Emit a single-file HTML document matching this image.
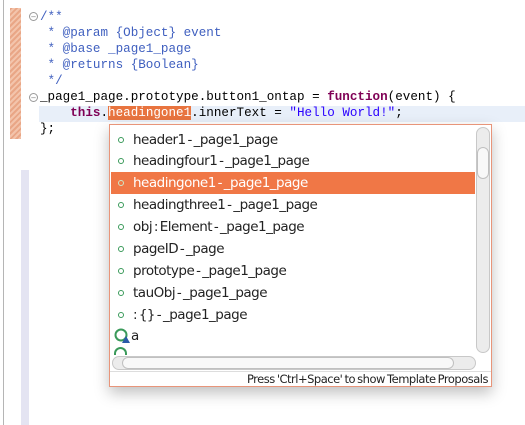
<!DOCTYPE html>
<html><head><style>
*{margin:0;padding:0;box-sizing:border-box}
body{width:525px;height:425px;background:#fff;position:relative;overflow:hidden;font-family:"Liberation Sans",sans-serif}
.abs{position:absolute}
.code{font-family:"Liberation Mono","DejaVu Sans Mono",monospace;font-size:12.6px;line-height:16px;white-space:pre;color:#000}
.cm{color:#3f5fbf}
.kw{color:#7f0055;font-weight:bold}
.str{color:#2a00ff}
.item{position:absolute;left:1px;width:364px;height:22px;font-size:13.5px;line-height:22px;color:#222;padding-left:22px;font-family:"DejaVu Sans","Liberation Sans",sans-serif;letter-spacing:-0.5px;word-spacing:-2px}
.item .dot{position:absolute;left:7px;top:8px;width:6px;height:6px;border:1.5px solid #3a9a5a;border-radius:50%}
.sel{background:#f07746;color:#fff}
.sel .dot{border-color:#cfe8c8}
.fold{position:absolute;left:29px;width:9px;height:9px;border:1px solid #999;border-radius:50%;font-size:8px;line-height:7px;text-align:center;color:#777}
</style></head><body>
<div class="abs" style="left:3px;top:0;width:1px;height:425px;background:#b5b5b5"></div>
<div class="abs" style="left:10px;top:8px;width:11px;height:131px;background:repeating-linear-gradient(135deg,#e9a686 0 2px,#f3c4ab 2px 4px)"></div>
<div class="abs" style="left:21px;top:170px;width:8px;height:255px;background:#e4e4f2"></div>
<div class="abs" style="left:39px;top:106px;width:486px;height:16px;background:#e8eff9"></div>
<div class="fold" style="top:12px">–</div>
<div class="fold" style="top:93px">–</div>
<div class="abs code" style="left:40px;top:9px"><span class="cm">/**
 * @param {Object} event
 * @base _page1_page
 * @returns {Boolean}
 */</span>
_page1_page.prototype.button1_ontap = <span class="kw">function</span>(event) {
    <span class="kw">this</span>.<span style="background:#e8743f;color:#fff">headingone1</span>.innerText = <span class="str">"Hello World!"</span>;
};</div>
<div class="abs" style="left:109px;top:124px;width:383px;height:263px;border:1px solid #e8957a;background:#fff;box-shadow:0 6px 14px rgba(0,0,0,0.25)">
 <div class="item" style="top:4px"><span class="dot"></span>header1 - _page1_page</div>
 <div class="item" style="top:25px"><span class="dot"></span>headingfour1 - _page1_page</div>
 <div class="item sel" style="top:47px"><span class="dot"></span>headingone1 - _page1_page</div>
 <div class="item" style="top:69px"><span class="dot"></span>headingthree1 - _page1_page</div>
 <div class="item" style="top:91px"><span class="dot"></span>obj : Element - _page1_page</div>
 <div class="item" style="top:113px"><span class="dot"></span>pageID - _page</div>
 <div class="item" style="top:135px"><span class="dot"></span>prototype - _page1_page</div>
 <div class="item" style="top:157px"><span class="dot"></span>tauObj - _page1_page</div>
 <div class="item" style="top:179px"><span class="dot"></span> : {} - _page1_page</div>
 <div class="item" style="top:200px;padding-left:20px"><svg style="position:absolute;left:3px;top:3px" width="16" height="16"><circle cx="7" cy="7" r="5.5" fill="none" stroke="#3a9a5a" stroke-width="2"/><path d="M8 15 L12 8 L16 15Z" fill="#2a5aa8"/></svg>a</div>
 <div class="abs" style="left:4px;top:222px;width:13px;height:8px;border:2px solid #3a9a5a;border-bottom:none;border-radius:7px 7px 0 0"></div>
 <div class="abs" style="left:366px;top:2px;width:14px;height:226px;border:1px solid #c8c8c8;border-radius:7px;background:#ececec"></div>
 <div class="abs" style="left:367px;top:22px;width:12px;height:32px;border:1px solid #c0c0c0;border-radius:6px;background:#f8f8f8"></div>
 <div class="abs" style="left:2px;top:231px;width:364px;height:14px;border:1px solid #c8c8c8;border-radius:7px;background:#ececec"></div>
 <div class="abs" style="left:12px;top:232px;width:332px;height:12px;border:1px solid #c0c0c0;border-radius:6px;background:#f8f8f8"></div>
 <div class="abs" style="left:0;top:246px;width:381px;height:1px;background:#ddd"></div>
 <div class="abs" style="right:3px;top:247px;font-size:11.5px;line-height:15px;color:#222;font-family:'DejaVu Sans',sans-serif;letter-spacing:-0.5px;word-spacing:-1px">Press 'Ctrl+Space' to show Template Proposals</div>
</div>
</body></html>
